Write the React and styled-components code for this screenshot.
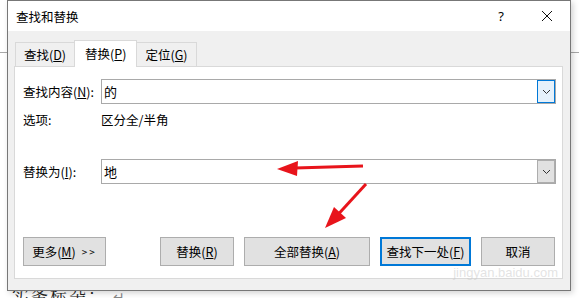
import React from 'react';
import styled, { createGlobalStyle } from 'styled-components';

const GlobalStyle = createGlobalStyle`
  html, body {
    margin: 0;
    padding: 0;
    background: #fff;
  }
  body {
    font-family: "Microsoft YaHei UI", "Noto Sans CJK SC", "Noto Sans", sans-serif;
    font-size: 12px;
    color: #000;
  }
`;

const Chevron = () => (
  <svg width="9" height="6" viewBox="0 0 9 6">
    <polyline points="1,1 4.5,4.5 8,1" fill="none" stroke="#333" strokeWidth="1" />
  </svg>
);

const CloseIcon = () => (
  <svg width="12" height="12" viewBox="0 0 12 12">
    <path d="M1 1 L11 11 M11 1 L1 11" stroke="#111" strokeWidth="1" />
  </svg>
);

export default function App() {
  return (
    <Page>
      <GlobalStyle />
      <Doc>
        <Rule />
        <DocText>实务标杂：<Return>↵</Return></DocText>
      </Doc>

      <Dialog>
        <TitleBar>
          <Title>查找和替换</Title>
          <TitleButton>?</TitleButton>
          <TitleButton>
            <CloseIcon />
          </TitleButton>
        </TitleBar>

        <Body>
          <Tabs>
            <Tab>查找(<u>D</u>)</Tab>
            <Tab active>替换(<u>P</u>)</Tab>
            <Tab>定位(<u>G</u>)</Tab>
          </Tabs>

          <Panel>
            <Row>
              <Label>查找内容(<u>N</u>):</Label>
              <Combo>
                <ComboText>的</ComboText>
                <DropButton focused>
                  <Chevron />
                </DropButton>
              </Combo>
            </Row>
            <OptionRow>
              <Label>选项:</Label>
              <span>区分全/半角</span>
            </OptionRow>
            <Row spaced>
              <Label>替换为(<u>I</u>):</Label>
              <Combo>
                <ComboText>地</ComboText>
                <DropButton>
                  <Chevron />
                </DropButton>
              </Combo>
            </Row>

            <ButtonBar>
              <Button width={83}>更多(<u>M</u>) <Small>&gt;&gt;</Small></Button>
              <ButtonGroup>
                <Button width={74}>替换(<u>R</u>)</Button>
                <Button width={126}>全部替换(<u>A</u>)</Button>
                <Button width={91} primary>查找下一处(<u>F</u>)</Button>
                <Button width={74}>取消</Button>
              </ButtonGroup>
            </ButtonBar>

            <Watermark>jingyan.baidu.com</Watermark>
          </Panel>
        </Body>

        <Arrows width="564" height="291" viewBox="0 0 564 291">
          <g fill="#e8141b" stroke="#e8141b">
            <path d="M356 166 L288 168" strokeWidth="3" fill="none" />
            <polygon points="270,169 291,161 290,176" stroke="none" />
            <path d="M359 184 L326 220" strokeWidth="3" fill="none" />
            <polygon points="318,228 327,207 339,218" stroke="none" />
          </g>
        </Arrows>
      </Dialog>
    </Page>
  );
}

const Page = styled.div`
  position: relative;
  width: 579px;
  height: 298px;
  overflow: hidden;
  background: #fff;
`;

const Doc = styled.div`
  display: flex;
  flex-direction: column;
  height: 100%;
  padding-top: 52px;
  box-sizing: border-box;
`;

const Rule = styled.div`
  height: 1px;
  background: #a8a8a8;
`;

const DocText = styled.div`
  margin-top: auto;
  margin-bottom: -9px;
  padding-left: 12px;
  font-family: "Noto Serif CJK SC", "Noto Sans CJK SC", serif;
  font-size: 17px;
  color: #222;
  letter-spacing: 2px;
`;

const Return = styled.span`
  color: #888;
  font-size: 14px;
  margin-left: 6px;
`;

const Dialog = styled.div`
  position: absolute;
  left: 7px;
  top: 0;
  width: 564px;
  height: 291px;
  box-sizing: border-box;
  border: 1px solid #777;
  background: #f0f0f0;
  box-shadow: 2px 2px 6px rgba(0, 0, 0, 0.18);
  display: flex;
  flex-direction: column;
`;

const TitleBar = styled.div`
  height: 30px;
  background: #fff;
  display: flex;
  align-items: center;
  flex-shrink: 0;
`;

const Title = styled.div`
  flex: 1;
  padding-left: 8px;
  font-size: 12.5px;
`;

const TitleButton = styled.div`
  width: 46px;
  height: 30px;
  display: flex;
  align-items: center;
  justify-content: center;
  font-family: "Segoe UI", "Noto Sans", sans-serif;
  font-size: 13px;
`;

const Body = styled.div`
  flex: 1;
  display: flex;
  flex-direction: column;
  padding: 10px 7px 11px 6px;
`;

const Tabs = styled.div`
  display: flex;
  align-items: flex-end;
  padding-left: 1px;
  height: 26px;
  margin-bottom: -1px;
  position: relative;
  z-index: 1;
`;

const Tab = styled.div`
  box-sizing: border-box;
  height: ${p => (p.active ? '27px' : '25px')};
  padding: ${p => (p.active ? '0 10px 2px' : '0 8px 1px')};
  margin: ${p => (p.active ? '0 -1px' : '0')};
  background: #${p => (p.active ? 'fff' : 'f0f0f0')};
  border: 1px solid #d9d9d9;
  border-bottom: ${p => (p.active ? 'none' : '1px solid #d9d9d9')};
  display: flex;
  align-items: center;
  position: relative;
  z-index: ${p => (p.active ? 2 : 1)};
  font-size: 12.5px;
  white-space: nowrap;
`;

const Panel = styled.div`
  position: relative;
  flex: 1;
  background: #fff;
  border: 1px solid #d9d9d9;
  display: flex;
  flex-direction: column;
  padding: 12px 6px 12px 8px;
`;

const Row = styled.div`
  display: flex;
  align-items: center;
  height: 25px;
  margin-top: ${p => (p.spaced ? '32px' : '0')};
`;

const OptionRow = styled.div`
  display: flex;
  align-items: center;
  height: 16px;
  margin-top: 7px;
  font-size: 12.5px;
`;

const Label = styled.div`
  width: 78px;
  flex-shrink: 0;
  font-size: 12.5px;
  white-space: nowrap;
`;

const Combo = styled.div`
  flex: 1;
  height: 25px;
  box-sizing: border-box;
  border: 1px solid #a9a9a9;
  display: flex;
  align-items: center;
  padding: 0 0 0 2px;
`;

const ComboText = styled.div`
  flex: 1;
  font-size: 13px;
`;

const DropButton = styled.div`
  width: 18px;
  height: 23px;
  box-sizing: border-box;
  border: 1px solid ${p => (p.focused ? '#0078d7' : '#adadad')};
  background: ${p => (p.focused ? '#e5f1fb' : '#e1e1e1')};
  display: flex;
  align-items: center;
  justify-content: center;
`;

const ButtonBar = styled.div`
  margin-top: auto;
  display: flex;
  justify-content: space-between;
  padding-right: 1px;
`;

const ButtonGroup = styled.div`
  display: flex;
  gap: 10px;
`;

const Button = styled.div`
  width: ${p => p.width}px;
  height: 29px;
  box-sizing: border-box;
  background: #e1e1e1;
  border: ${p => (p.primary ? '2px solid #0078d7' : '1px solid #adadad')};
  display: flex;
  align-items: center;
  justify-content: center;
  font-size: 12.5px;
  white-space: nowrap;
`;

const Small = styled.span`
  font-size: 10px;
  margin-left: 6px;
  letter-spacing: 2px;
`;

const Watermark = styled.div`
  position: absolute;
  right: 4px;
  bottom: -2px;
  font-family: "Liberation Sans", sans-serif;
  font-size: 13px;
  color: rgba(200, 200, 200, 0.5);
`;

const Arrows = styled.svg`
  position: absolute;
  left: -1px;
  top: -1px;
  pointer-events: none;
`;
